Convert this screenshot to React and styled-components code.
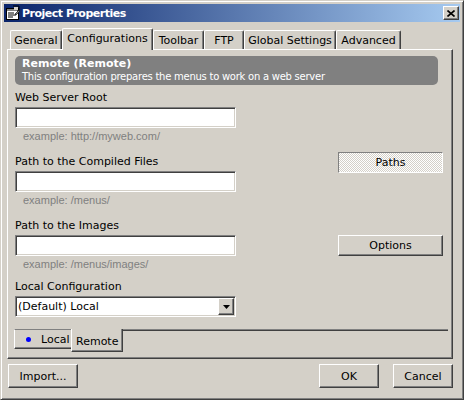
import React from "react";
import styled, { createGlobalStyle, css } from "styled-components";

const GlobalStyle = createGlobalStyle`
  body {
    margin: 0;
    background: #d4d0c8;
  }
`;

const raised = css`
  border: 1px solid;
  border-color: #fff #404040 #404040 #fff;
  box-shadow: inset -1px -1px #808080;
`;

const sunken = css`
  border: 1px solid;
  border-color: #808080 #fff #fff #808080;
  box-shadow: inset 1px 1px #404040, inset -1px -1px #d4d0c8;
`;

const Window = styled.div`
  width: 464px;
  height: 400px;
  box-sizing: border-box;
  background: #d4d0c8;
  border: 1px solid;
  border-color: #d4d0c8 #404040 #404040 #d4d0c8;
  box-shadow: inset 1px 1px #fff, inset -1px -1px #808080;
  padding: 3px;
  display: flex;
  flex-direction: column;
  font-family: "DejaVu Sans", sans-serif;
  font-size: 11px;
  color: #000;
`;

const TitleBar = styled.div`
  height: 18px;
  flex: none;
  display: flex;
  align-items: center;
  gap: 1px;
  padding: 0 1px 0 1px;
  background: linear-gradient(to right, #0a246a, #a6caf0);
`;

const TitleText = styled.span`
  color: #fff;
  font-weight: bold;
  font-size: 11px;
  letter-spacing: -0.5px;
`;

const CloseButton = styled.div`
  ${raised};
  margin-left: auto;
  width: 14px;
  height: 12px;
  background: #d4d0c8;
  display: flex;
  align-items: center;
  justify-content: center;
`;

const Body = styled.div`
  flex: 1;
  display: flex;
  flex-direction: column;
  padding: 6px 7px 0 3px;
`;

const TabRow = styled.div`
  display: flex;
  align-items: flex-end;
  height: 22px;
  padding-left: 3px;
  position: relative;
  z-index: 1;
  margin-bottom: -1px;
`;

const Tab = styled.div`
  box-sizing: border-box;
  width: ${(p) => p.$w}px;
  height: ${(p) => (p.$active ? 22 : 19)}px;
  margin-bottom: ${(p) => (p.$active ? 0 : 1)}px;
  background: #d4d0c8;
  border-top: 1px solid #fff;
  border-left: 1px solid #fff;
  border-right: 1px solid #404040;
  border-radius: 2px 2px 0 0;
  box-shadow: inset -1px 0 #808080;
  display: flex;
  align-items: ${(p) => (p.$active ? "flex-start" : "center")};
  padding-top: ${(p) => (p.$active ? 3 : 0)}px;
  justify-content: center;
  white-space: nowrap;
`;

const Panel = styled.div`
  box-sizing: border-box;
  height: 310px;
  border: 1px solid;
  border-color: #fff #404040 #404040 #fff;
  box-shadow: inset -1px -1px #808080;
  padding: 6px 7px 0 7px;
  display: flex;
  flex-direction: column;
`;

const Header = styled.div`
  height: 29px;
  box-sizing: border-box;
  margin-right: 7px;
  background: #808080;
  border-radius: 5px;
  padding: 1px 0 0 7px;
  color: #fff;
`;

const HeaderTitle = styled.div`
  font-weight: bold;
  font-size: 11px;
  line-height: 13px;
`;

const HeaderDesc = styled.div`
  font-size: 10px;
  line-height: 13px;
  letter-spacing: -0.25px;
  white-space: nowrap;
`;

const Form = styled.div`
  display: grid;
  grid-template-columns: 221px 1fr;
  margin-top: 5px;
`;

const Fields = styled.div`
  display: flex;
  flex-direction: column;
`;

const Field = styled.div`
  display: flex;
  flex-direction: column;
  margin-bottom: ${(p) => p.$gap}px;
`;

const Label = styled.div`
  line-height: 16px;
  height: 16px;
  white-space: nowrap;
`;

const TextBox = styled.div`
  ${sunken};
  box-sizing: border-box;
  height: 21px;
  margin-top: 1px;
  background: #fff;
`;

const Example = styled.div`
  font-family: "Liberation Sans", Arial, sans-serif;
  font-size: 11px;
  line-height: 14px;
  margin: 1px 0 0 8px;
  color: #808080;
  white-space: nowrap;
`;

const Select = styled.div`
  ${sunken};
  box-sizing: border-box;
  height: 21px;
  margin-top: 1px;
  background: #fff;
  display: flex;
  align-items: center;
  padding: 0 1px 0 1px;
`;

const SelectValue = styled.span`
  flex: 1;
  font-size: 11px;
  padding-left: 1px;
`;

const ArrowButton = styled.div`
  ${raised};
  box-sizing: border-box;
  width: 16px;
  height: 17px;
  background: #d4d0c8;
  display: flex;
  align-items: center;
  justify-content: center;
`;

const ButtonCol = styled.div`
  display: flex;
  flex-direction: column;
  align-items: flex-end;
  padding: 62px 2px 0 0;
`;

const Button = styled.div`
  ${(p) =>
    p.$pressed
      ? css`
          border: 1px solid;
          border-color: #808080 #fff #fff #808080;
          background: repeating-conic-gradient(#fff 0 25%, #d4d0c8 0 50%) 0 0 / 2px 2px;
        `
      : css`
          ${raised};
          background: #d4d0c8;
        `}
  box-sizing: border-box;
  width: ${(p) => p.$w}px;
  height: ${(p) => p.$h || 21}px;
  margin-top: ${(p) => p.$top || 0}px;
  display: flex;
  align-items: center;
  justify-content: center;
  font-size: 11px;
`;

const BottomTabs = styled.div`
  display: flex;
  align-items: flex-start;
  margin: 12px -3px 0 -1px;
`;

const BottomTab = styled.div`
  box-sizing: border-box;
  width: ${(p) => p.$w}px;
  height: ${(p) => (p.$active ? 23 : 20)}px;
  background: #d4d0c8;
  display: flex;
  align-items: center;
  gap: 10px;
  padding-left: ${(p) => (p.$active ? 4 : 11)}px;
  padding-top: ${(p) => (p.$active ? 2 : 0)}px;
  ${(p) =>
    p.$active
      ? css`
          border-left: 1px solid #fff;
          border-right: 1px solid #404040;
          border-bottom: 1px solid #404040;
          box-shadow: inset -1px -1px #808080;
        `
      : css`
          border-top: 1px solid #808080;
          border-left: 1px solid #fff;
          border-bottom: 1px solid #404040;
          box-shadow: inset 0 -1px #808080;
        `}
`;

const Dot = styled.span`
  width: 5px;
  height: 5px;
  border-radius: 50%;
  background: #0000ff;
`;

const TabLine = styled.div`
  flex: 1;
  height: 2px;
  border-top: 1px solid #808080;
  box-shadow: inset 0 1px #404040;
`;

const Footer = styled.div`
  display: flex;
  align-items: center;
  margin-top: 5px;
  padding-left: 1px;
`;

const Spacer = styled.div`
  flex: 1;
`;

const FooterGap = styled.div`
  width: 14px;
`;

const AppIcon = () => (
  <svg width="16" height="16" viewBox="0 0 16 16">
    <rect x="1.5" y="3.5" width="12" height="11" fill="#fff" stroke="#000" />
    <rect x="2" y="4" width="11" height="2" fill="#808080" />
    <path d="M3 8h6M3 10h8M3 12h5" stroke="#000" />
    <path d="M8 1h6v5h-2" fill="none" stroke="#000" />
    <path d="M9 2h4v3h-4z" fill="#d4d0c8" />
    <path d="M10 9l4-4 1 1-4 4z" fill="#808080" stroke="#000" strokeWidth="0.6" />
  </svg>
);

const CloseGlyph = () => (
  <svg width="8" height="7" viewBox="0 0 8 7">
    <path d="M0.5 0.5L7.5 6.5M7.5 0.5L0.5 6.5" stroke="#000" strokeWidth="1.6" />
  </svg>
);

const DownArrow = () => (
  <svg width="7" height="4" viewBox="0 0 7 4">
    <path d="M0 0h7L3.5 4z" fill="#000" />
  </svg>
);

const tabs = [
  { label: "General", w: 52 },
  { label: "Configurations", w: 91, active: true },
  { label: "Toolbar", w: 51 },
  { label: "FTP", w: 40 },
  { label: "Global Settings", w: 92 },
  { label: "Advanced", w: 65 },
];

const fields = [
  { label: "Web Server Root", example: "example: http://myweb.com/", gap: 11 },
  { label: "Path to the Compiled Files", example: "example: /menus/", gap: 11 },
  { label: "Path to the Images", example: "example: /menus/images/", gap: 8 },
];

const App = () => {
  return (
    <>
      <GlobalStyle />
      <Window>
        <TitleBar>
          <AppIcon />
          <TitleText>Project Properties</TitleText>
          <CloseButton>
            <CloseGlyph />
          </CloseButton>
        </TitleBar>
        <Body>
          <TabRow>
            {tabs.map((t) => (
              <Tab key={t.label} $w={t.w} $active={t.active}>
                {t.label}
              </Tab>
            ))}
          </TabRow>
          <Panel>
            <Header>
              <HeaderTitle>Remote (Remote)</HeaderTitle>
              <HeaderDesc>This configuration prepares the menus to work on a web server</HeaderDesc>
            </Header>
            <Form>
              <Fields>
                {fields.map((f) => (
                  <Field key={f.label} $gap={f.gap}>
                    <Label>{f.label}</Label>
                    <TextBox />
                    <Example>{f.example}</Example>
                  </Field>
                ))}
                <Field $gap={0}>
                  <Label>Local Configuration</Label>
                  <Select>
                    <SelectValue>(Default) Local</SelectValue>
                    <ArrowButton>
                      <DownArrow />
                    </ArrowButton>
                  </Select>
                </Field>
              </Fields>
              <ButtonCol>
                <Button $w={105} $pressed>Paths</Button>
                <Button $w={105} $top={62}>Options</Button>
              </ButtonCol>
            </Form>
            <BottomTabs>
              <BottomTab $w={57}>
                <Dot />
                Local
              </BottomTab>
              <BottomTab $w={52} $active>
                Remote
              </BottomTab>
              <TabLine />
            </BottomTabs>
          </Panel>
          <Footer>
            <Button $w={70} $h={24}>Import...</Button>
            <Spacer />
            <Button $w={60} $h={24}>OK</Button>
            <FooterGap />
            <Button $w={60} $h={24}>Cancel</Button>
          </Footer>
        </Body>
      </Window>
    </>
  );
};

export default App;
